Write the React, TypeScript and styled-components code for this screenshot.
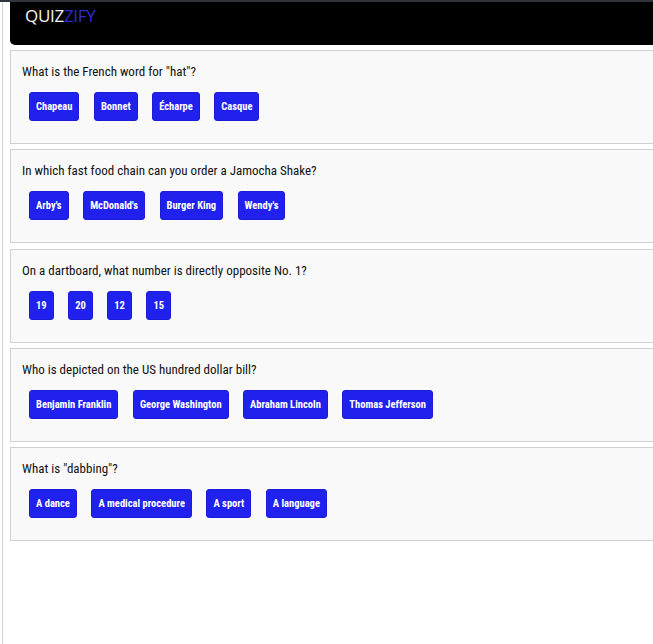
import React from "react";
import styled, { createGlobalStyle } from "styled-components";

const GlobalStyle = createGlobalStyle`
  html, body {
    margin: 0;
    padding: 0;
    background: #ffffff;
    overflow-x: hidden;
  }
  body {
    font-family: "Roboto Condensed", "Liberation Sans", Arial, sans-serif;
  }
`;

const TopStrip = styled.div`
  height: 2px;
  background: #30353c;
`;

const Page = styled.div`
  margin-left: 2px;
  border-left: 1px solid #d4d4d4;
  padding-left: 7px;
  min-height: 642px;
  box-sizing: border-box;
`;

const Header = styled.header`
  width: 660px;
  height: 43px;
  background: #000000;
  border-bottom-left-radius: 5px;
  display: flex;
  align-items: flex-start;
  padding: 2px 0 0 15px;
  box-sizing: border-box;
`;

const Logo = styled.h1`
  margin: 0;
  font-family: "Open Sans", "Liberation Sans", Arial, sans-serif;
  font-size: 17px;
  font-weight: 400;
  line-height: 24px;
  letter-spacing: -0.3px;
  color: #f4f4f4;
`;

const LogoAccent = styled.span`
  color: #2d2dd2;
`;

const List = styled.main`
  display: flex;
  flex-direction: column;
  gap: 5.33px;
  margin-top: 5px;
`;

const Card = styled.section`
  width: 660px;
  height: 94px;
  box-sizing: border-box;
  border: 1px solid #d0d0d0;
  background: #f9f9f9;
  padding: 12px 11px 0;
`;

const Question = styled.p`
  margin: 0;
  font-size: 13px;
  line-height: 17px;
  color: #111111;
`;

const Options = styled.div`
  display: flex;
  gap: 14.5px;
  margin-top: 12px;
  padding-left: 7px;
`;

const Option = styled.button`
  height: 29px;
  min-width: 23px;
  padding: 0 6px;
  border: 1px solid #1c1cd8;
  border-radius: 3px;
  background: #2121ee;
  color: #ffffff;
  font-family: "Roboto Condensed", "Liberation Sans", Arial, sans-serif;
  font-weight: 700;
  font-size: 10.5px;
  cursor: pointer;
`;

const questions = [
  { q: 'What is the French word for "hat"?', a: ["Chapeau", "Bonnet", "Écharpe", "Casque"] },
  { q: "In which fast food chain can you order a Jamocha Shake?", a: ["Arby's", "McDonald's", "Burger King", "Wendy's"] },
  { q: "On a dartboard, what number is directly opposite No. 1?", a: ["19", "20", "12", "15"] },
  { q: "Who is depicted on the US hundred dollar bill?", a: ["Benjamin Franklin", "George Washington", "Abraham Lincoln", "Thomas Jefferson"] },
  { q: 'What is "dabbing"?', a: ["A dance", "A medical procedure", "A sport", "A language"] },
];

export default function App() {
  return (
    <>
      <GlobalStyle />
      <TopStrip />
      <Page>
        <Header>
          <Logo>
            QUIZ<LogoAccent>ZIFY</LogoAccent>
          </Logo>
        </Header>
        <List>
          {questions.map((item) => (
            <Card key={item.q}>
              <Question>{item.q}</Question>
              <Options>
                {item.a.map((opt) => (
                  <Option key={opt}>{opt}</Option>
                ))}
              </Options>
            </Card>
          ))}
        </List>
      </Page>
    </>
  );
}
